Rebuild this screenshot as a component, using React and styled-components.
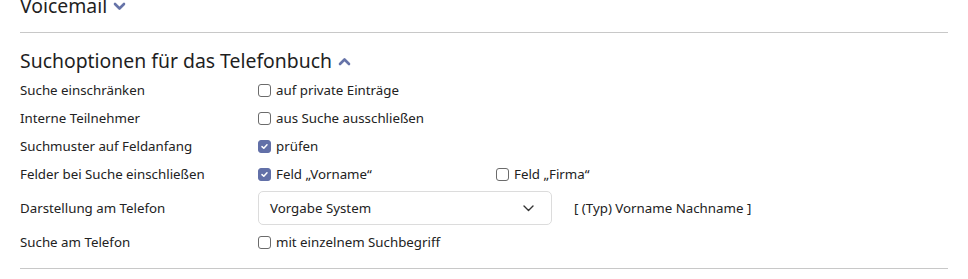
import React from 'react'
import styled, { createGlobalStyle } from 'styled-components'

const Global = createGlobalStyle`
  body {
    margin: 0;
    background: #fff;
    font-family: "Noto Sans", "Open Sans", sans-serif;
    color: #222;
    overflow: hidden;
  }
`

const Page = styled.div`
  padding: 0 20px;
  width: 928px;
`

const Section = styled.section`
  border-bottom: 1px solid #c8c8c8;
  padding-bottom: ${p => p.$pb || 12}px;
  margin-top: ${p => p.$mt || 0}px;
`

const Heading = styled.h2`
  margin: 0;
  font-size: 19.4px;
  line-height: 24px;
  font-weight: 400;
  color: #1f1f1f;
  display: flex;
  align-items: center;
  gap: 6px;
  padding-top: ${p => p.$pt || 0}px;
  margin-bottom: ${p => p.$mb || 0}px;
`

const Row = styled.div`
  display: grid;
  grid-template-columns: 238px 238px auto;
  align-items: center;
  min-height: 28px;
  padding: ${p => (p.$tall ? '3px 0' : '0')};
  font-size: 13.3px;
`

const Label = styled.div`
  color: #222;
`

const Check = styled.label`
  display: flex;
  align-items: center;
  gap: 5px;
  color: #222;
  white-space: nowrap;
`

const Box = styled.span`
  width: 13px;
  height: 13px;
  box-sizing: border-box;
  border-radius: 3px;
  border: 1px solid ${p => (p.$on ? '#6270a8' : '#6b6b6b')};
  background: ${p => (p.$on ? '#6270a8' : '#fff')};
  display: flex;
  align-items: center;
  justify-content: center;
`

const Select = styled.div`
  width: 294px;
  height: 34px;
  box-sizing: border-box;
  border: 1px solid #dcdcdc;
  border-radius: 5px;
  display: flex;
  align-items: center;
  justify-content: space-between;
  padding: 0 17px 0 11px;
  font-size: 13.3px;
  color: #222;
`

const Hint = styled.div`
  padding-left: 78px;
  white-space: nowrap;
`

const Chevron = ({ up }) => (
  <svg width="13" height="9" viewBox="0 0 13 9">
    <polyline
      points={up ? '2,7 6.5,2.5 11,7' : '2,2 6.5,6.5 11,2'}
      fill="none"
      stroke="#6673a8"
      strokeWidth="2.6"
      strokeLinecap="round"
      strokeLinejoin="round"
    />
  </svg>
)

const CheckBox = ({ on, children }) => (
  <Check>
    <Box $on={on}>
      {on && (
        <svg width="9" height="9" viewBox="0 0 9 9">
          <polyline points="2,4.6 3.8,6.3 7,2.8" fill="none" stroke="#fff" strokeWidth="1.5" strokeLinecap="round" strokeLinejoin="round" />
        </svg>
      )}
    </Box>
    {children}
  </Check>
)

const App = () => (
  <Page>
    <Global />
    <Section $mt={-6} $pb={14}>
      <Heading>Voicemail <Chevron /></Heading>
    </Section>
    <Section $pb={12}>
      <Heading $pt={16} $mb={3}>Suchoptionen für das Telefonbuch <Chevron up /></Heading>
      <Row>
        <Label>Suche einschränken</Label>
        <CheckBox>auf private Einträge</CheckBox>
      </Row>
      <Row>
        <Label>Interne Teilnehmer</Label>
        <CheckBox>aus Suche ausschließen</CheckBox>
      </Row>
      <Row>
        <Label>Suchmuster auf Feldanfang</Label>
        <CheckBox on>prüfen</CheckBox>
      </Row>
      <Row>
        <Label>Felder bei Suche einschließen</Label>
        <CheckBox on>Feld „Vorname“</CheckBox>
        <CheckBox>Feld „Firma“</CheckBox>
      </Row>
      <Row $tall>
        <Label>Darstellung am Telefon</Label>
        <Select>
          Vorgabe System
          <svg width="11" height="7" viewBox="0 0 11 7">
            <polyline points="1,1 5.5,5.5 10,1" fill="none" stroke="#333" strokeWidth="1.4" strokeLinecap="round" strokeLinejoin="round" />
          </svg>
        </Select>
        <Hint>[ (Typ) Vorname Nachname ]</Hint>
      </Row>
      <Row>
        <Label>Suche am Telefon</Label>
        <CheckBox>mit einzelnem Suchbegriff</CheckBox>
      </Row>
    </Section>
  </Page>
)

export default App
